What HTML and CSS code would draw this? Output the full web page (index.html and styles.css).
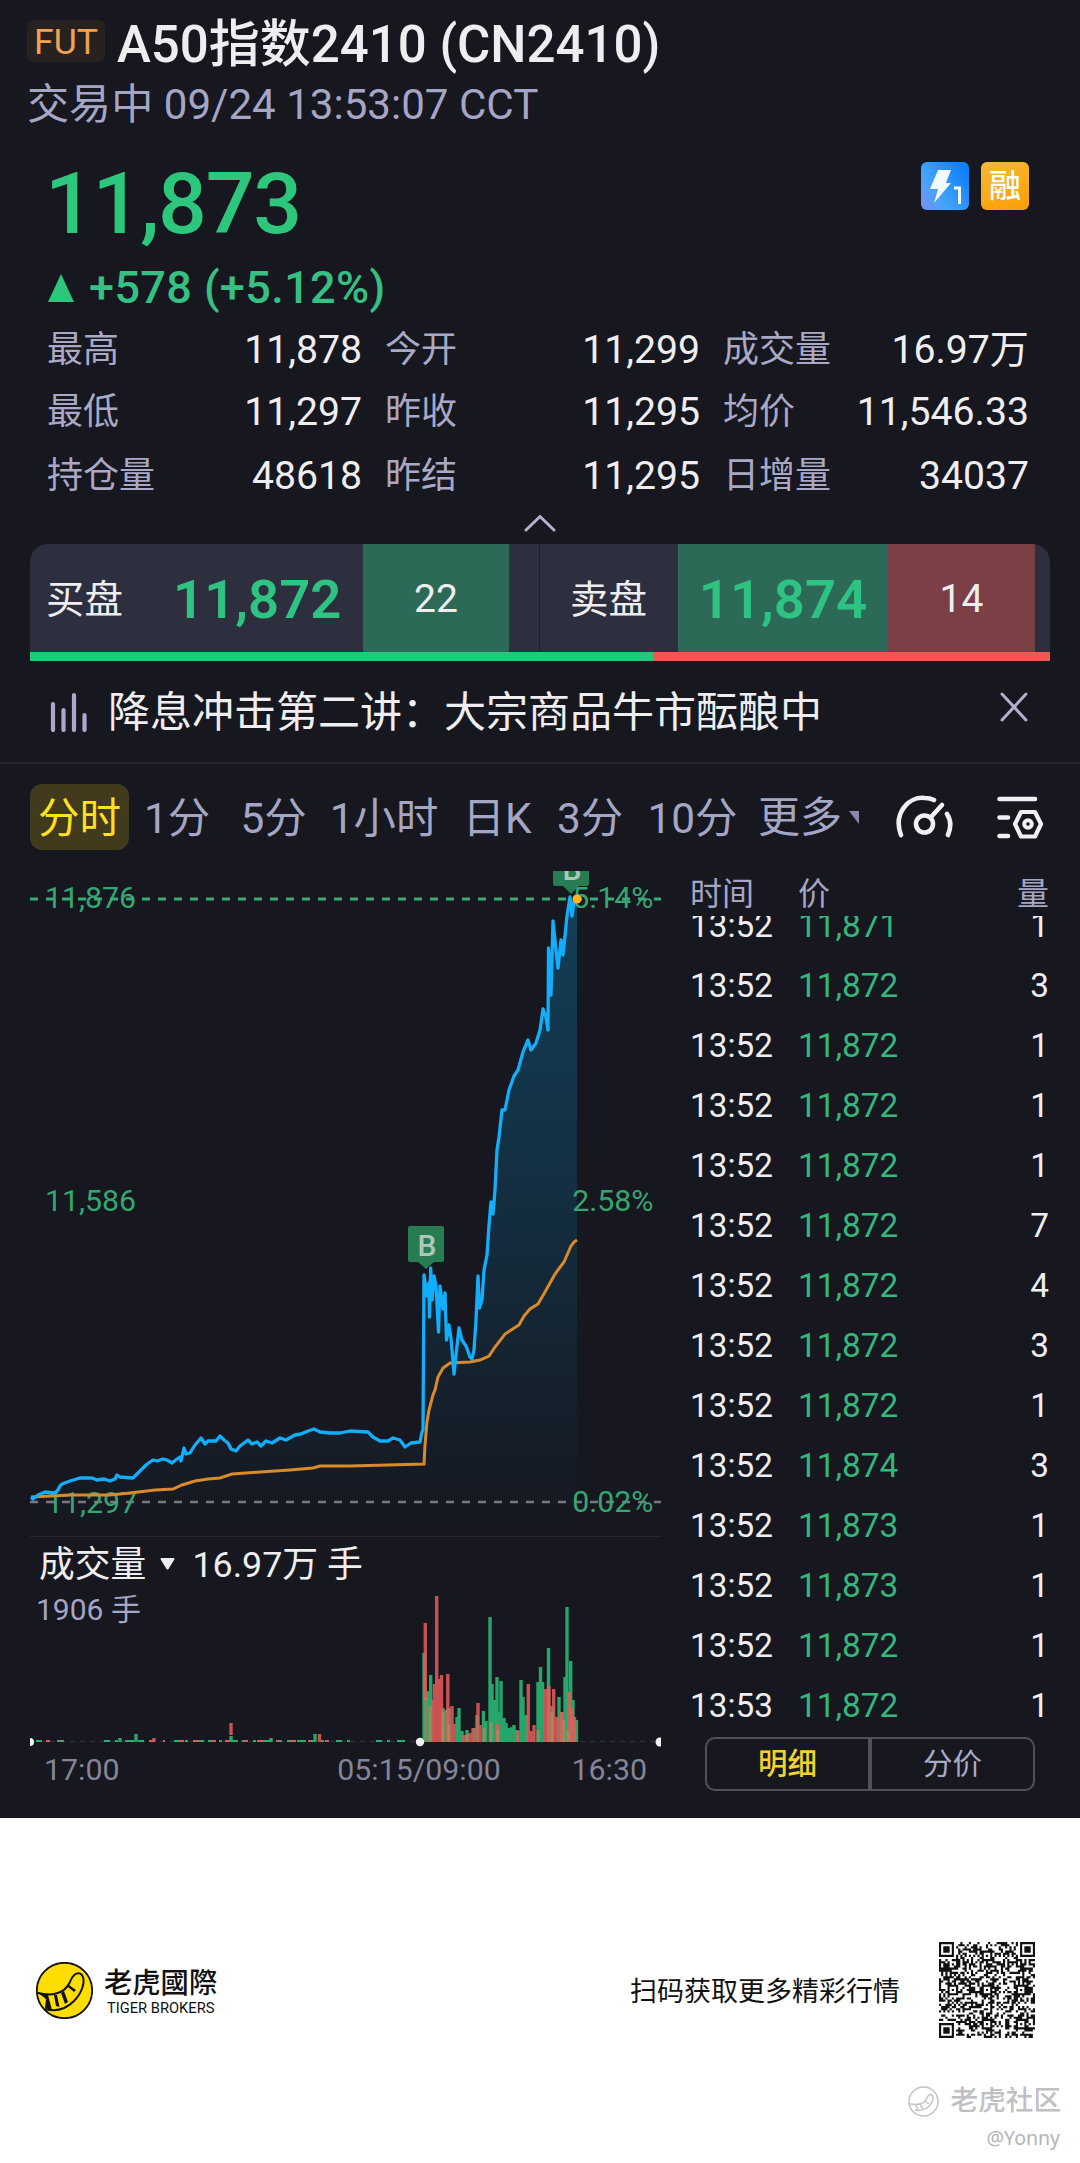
FILE: index.html
```html
<!DOCTYPE html>
<html lang="zh-CN">
<head>
<meta charset="utf-8">
<title>A50指数2410 (CN2410)</title>
<link rel="stylesheet" href="styles.css">
</head>
<body>
<main class="quote">
  <header class="head">
    <div class="title-row"><span class="badge">FUT</span><h1 class="title">A50指数2410 (CN2410)</h1></div>
    <div class="status">交易中 09/24 13:53:07 CCT</div>
  </header>

  <section class="price-row">
    <div class="price">11,873</div>
    <div class="flags">
      <svg class="flag" viewBox="0 0 48 48">
        <defs><linearGradient id="blue" x1="0" y1="1" x2="1" y2="0.3"><stop offset="0" stop-color="#7b8ff5"/><stop offset=".4" stop-color="#43a4fb"/><stop offset="1" stop-color="#0f80fa"/></linearGradient></defs>
        <rect width="48" height="48" rx="6" fill="url(#blue)"/>
        <path d="M17 8H30L25 21H30L13 41L17 27H9Z" fill="#f2f9ff"/>
        <path d="M33 26H38.500V42" fill="none" stroke="#f2f9ff" stroke-width="3"/>
      </svg>
      <span class="flag flag-margin">融</span>
    </div>
  </section>
  <div class="change"><svg class="up" viewBox="0 0 26 28"><path d="M13 0L26 28H0Z"/></svg>+578 (+5.12%)</div>

  <dl class="stats">
    <div class="stat"><dt>最高</dt><dd>11,878</dd></div>
    <div class="stat"><dt>今开</dt><dd>11,299</dd></div>
    <div class="stat"><dt>成交量</dt><dd>16.97万</dd></div>
    <div class="stat"><dt>最低</dt><dd>11,297</dd></div>
    <div class="stat"><dt>昨收</dt><dd>11,295</dd></div>
    <div class="stat"><dt>均价</dt><dd>11,546.33</dd></div>
    <div class="stat"><dt>持仓量</dt><dd>48618</dd></div>
    <div class="stat"><dt>昨结</dt><dd>11,295</dd></div>
    <div class="stat"><dt>日增量</dt><dd>34037</dd></div>
  </dl>
  <div class="collapse"><svg width="32" height="18" viewBox="0 0 32 18"><path d="M2 16L16 2.500L30 16" fill="none" stroke="#b3b2cd" stroke-width="3" stroke-linecap="round"/></svg></div>

  <section class="book">
    <div class="book-row">
      <span class="side">买盘</span><span class="bid">11,872</span><span class="qty qty-bid">22</span><span class="spacer"></span>
      <span class="side side-ask">卖盘</span><span class="ask">11,874</span><span class="qty qty-ask">14</span>
    </div>
    <div class="ratio"><span class="ratio-buy"></span><span class="ratio-sell"></span></div>
  </section>

  <section class="news">
    <svg width="38" height="40" viewBox="0 0 38 40"><path d="M3 12V38M13.500 18V38M24 3V38M34.500 23V38" stroke="#aaa9cb" stroke-width="4.200" stroke-linecap="round"/></svg>
    <span class="news-text">降息冲击第二讲：大宗商品牛市酝酿中</span>
    <svg class="close" width="28" height="30" viewBox="0 0 28 30"><path d="M2 2L26 28M26 2L2 28" stroke="#b0afcc" stroke-width="3" stroke-linecap="round"/></svg>
  </section>

  <nav class="tabs">
    <span class="tab tab-on">分时</span><span class="tab">1分</span><span class="tab">5分</span><span class="tab">1小时</span><span class="tab">日K</span><span class="tab">3分</span><span class="tab">10分</span>
    <span class="tab tab-more">更多<svg width="10" height="13" viewBox="0 0 10 13"><path d="M0 0H10V13Z" fill="#8988a8"/></svg></span>
    <svg class="tool" width="60" height="46" viewBox="894 795 60 46" fill="none" stroke="#f0f0f2" stroke-width="4.600" stroke-linecap="round">
      <path d="M901 835C893 814 908 796 925 798Q930 798 934 800M947 814Q953 823 948 835"/><circle cx="924.500" cy="824" r="8.500"/><path d="M931 817L942 805"/>
    </svg>
    <svg class="tool" width="50" height="46" viewBox="995 796 50 46" fill="none" stroke="#f0f0f2" stroke-width="4.600" stroke-linecap="round">
      <path d="M999.500 800H1035M999.500 818.500H1008M999.500 837H1008"/><path d="M1021 813H1035L1041 825L1035 837.500H1021L1015 825Z" stroke-linejoin="round" stroke-width="4.200"/><circle cx="1028" cy="825" r="3.800" stroke-width="4"/>
    </svg>
  </nav>

  <section class="market">
    <div class="charts">
      <svg class="price-chart" viewBox="30 868 631 668">
        <defs><linearGradient id="area" x1="0" y1="896" x2="0" y2="1536" gradientUnits="userSpaceOnUse"><stop offset="0" stop-color="#0b86bb" stop-opacity=".36"/><stop offset=".5" stop-color="#0b86bb" stop-opacity=".2"/><stop offset="1" stop-color="#0b86bb" stop-opacity="0"/></linearGradient>
        <clipPath id="plot"><rect x="30" y="871" width="631" height="665"/></clipPath></defs>
        <path fill="url(#area)" d="M31 1497L60 1486L80 1478L133 1478L153 1460L172 1463L201 1438L220 1436L236 1451L248 1440L314 1429L368 1432L380 1441L405 1447L420 1442L423 1430L424 1275L427 1296L429 1283L429.500 1317L430.700 1268L432 1300L434 1276L436 1285L438.500 1332L440 1286L443 1309L445 1293L446.500 1340L449 1325L451 1338L454 1374L456 1355L459 1328L462 1340L466 1346L470 1357L472 1359L474 1350L476 1320L478 1276L479.500 1308L482 1300L484 1270L487 1255L489 1225L491 1202L493 1214L495 1190L497 1150L499 1137L502 1110L505 1110L509 1090L514 1076L518 1070L523 1052L528 1040L531 1050L536 1043L540 1030L543 1009L546 1017L548 1030L548.500 948L551 995L553 921L556 950L558 968L561 940L563 955L567 916L570 897L572 916L574 902L577 899V1536H31Z"/>
        <path d="M30 1502H661" stroke="#777783" stroke-width="2.500" stroke-dasharray="8 8"/>
        <g class="axis">
          <text x="45" y="908">11,876</text><text x="45" y="1211">11,586</text><text x="46" y="1513">11,297</text>
          <text x="653.500" y="908" text-anchor="end">5.14%</text><text x="653.500" y="1211" text-anchor="end">2.58%</text><text x="653.500" y="1512" text-anchor="end">0.02%</text>
        </g>
        <path d="M30 899H661" stroke="#34ad77" stroke-width="2.800" stroke-dasharray="8 8"/>
        <path fill="none" stroke="#d98a2b" stroke-width="3" d="M31 1497L70 1495L110 1495L130 1493L155 1490L173 1489L182 1485L195 1481L208 1479L220 1478L232 1474L260 1472L290 1470L313 1468L320 1466L350 1466L424 1464L425 1445L427 1422L429 1410L433 1395L435 1390L438 1377L443 1368L450 1363L470 1362L480 1360L489 1356L495 1347L505 1334L519 1325L524 1316L530 1309L538 1304L545 1292L555 1274L564 1262L571 1246L574 1242L577 1240"/>
        <path fill="none" stroke="#12aefb" stroke-width="3.300" stroke-linejoin="round" d="M31 1497L33 1499L38 1495L45 1492L55 1493L58 1490L60 1486L62 1484L70 1481L80 1478L92 1478L97 1480L104 1479L110 1481L115 1479L117 1475L120 1477L133 1478L137 1474L141 1470L146 1465L150 1462L153 1460L157 1461L163 1459L167 1460L172 1463L177 1459L180 1457L181 1461L184 1448L186 1454L190 1453L195 1445L201 1438L205 1444L208 1441L216 1441L220 1436L224 1440L228 1443L231 1449L236 1451L240 1446L248 1440L252 1444L257 1442L261 1446L266 1441L272 1443L280 1438L286 1440L295 1435L301 1434L308 1431L314 1429L320 1432L330 1433L340 1433L350 1431L368 1432L373 1437L380 1441L388 1441L393 1438L400 1440L405 1447L411 1443L420 1442L422 1432L423 1430L424 1275L427 1296L429 1283L429.500 1317L430.700 1268L432 1300L434 1276L436 1285L438.500 1332L440 1286L443 1309L445 1293L446.500 1340L449 1325L451 1338L454 1374L456 1355L459 1328L462 1340L466 1346L470 1357L472 1359L474 1350L476 1320L478 1276L479.500 1308L482 1300L484 1270L487 1255L489 1225L491 1202L493 1214L495 1190L497 1150L499 1137L502 1110L505 1110L509 1090L514 1076L518 1070L523 1052L528 1040L531 1050L536 1043L540 1030L543 1009L546 1017L548 1030L548.500 948L551 995L553 921L556 950L558 968L561 940L563 955L567 916L570 897L572 916L574 902L577 899"/>
        <g clip-path="url(#plot)">
          <path class="mark" d="M410 1226H442Q444 1226 444 1228V1260Q444 1262 442 1262H434L426 1269L418 1262H410Q408 1262 408 1260V1228Q408 1226 410 1226Z"/><text class="mark-b" x="427" y="1255.500">B</text>
          <path class="mark" d="M553 850H589V884Q589 886 587 886H579L571 894L563 886H555Q553 886 553 884Z"/><text class="mark-b" x="572" y="880">B</text>
        </g>
        <circle cx="577" cy="899" r="4.500" fill="#ffb51e"/>
      </svg>
      <div class="vol-head">成交量<svg width="15" height="12" viewBox="0 0 15 12"><path d="M1 0H14Q15 1 14 2L8.500 11Q7.500 12 6.500 11L1 2Q0 1 1 0Z" fill="#eeeef2"/></svg>16.97万 手</div>
      <svg class="vol-chart" viewBox="30 1593 631 157">
        <text class="vol-max" x="36" y="1620">1906 手</text>
        <path d="M30 1741.500H661" stroke="#2c2d37" stroke-width="1.500" stroke-dasharray="5 5"/>
        <path stroke="#2bae70" stroke-width="2" stroke-dasharray="6 5 3 7 9 4" d="M36 1741H64M104 1741H150M174 1741H330M336 1741H350M376 1741H405"/>
        <path stroke="#c96463" stroke-width="2" stroke-dasharray="4 9 7 12" d="M46 1741H62M150 1741H165M180 1741H315M325 1741H336"/>
        <path stroke="#27ae70" stroke-width="3.400" opacity=".95" d="M136 1742V1734M120 1742V1738M231 1742V1736M271 1742V1738M315 1742V1734M424 1742V1653M428 1742V1691M430.700 1742V1675M443 1742V1708M446 1742V1710M449 1742V1708M457 1742V1717M459 1742V1708M462 1742V1731M467 1742V1730M475 1742V1728M477 1742V1715M483.500 1742V1711M486 1742V1721M490 1742V1617M492 1742V1684M495 1742V1700M497 1742V1677M499 1742V1712M501 1742V1681M504 1742V1718M506 1742V1723M509 1742V1728M512 1742V1727M514 1742V1725M517 1742V1730M521 1742V1680M523 1742V1697M526 1742V1715M538 1742V1682M540.500 1742V1667M542.500 1742V1682M548.500 1742V1648M552 1742V1706M559 1742V1697M562 1742V1712M565 1742V1677M567 1742V1607M570.700 1742V1661M573 1742V1700M576.500 1742V1720"/>
        <path stroke="#ea5c5b" stroke-width="3.400" opacity=".85" d="M154 1742V1738M231 1735V1723M319.500 1742V1734M425.300 1700V1623M433 1742V1700M436.700 1742V1596M434.500 1742V1684M439 1742V1679M441.500 1742V1675M447.800 1742V1674M452 1742V1706M454 1742V1724M464 1742V1735M470 1742V1733M473 1742V1728M478 1742V1703M480 1742V1725M497.500 1742V1724M518 1742V1731M528.300 1742V1684M531 1742V1731M534 1742V1725M545.500 1742V1689M549 1742V1686M553.700 1742V1689M557 1742V1717M561.500 1742V1712M569 1742V1692M571.500 1742V1708M574.500 1742V1717"/>
        <path stroke="#b8895f" stroke-width="3" opacity=".7" d="M426 1742V1697M430 1742V1706M443 1742V1712M449 1742V1725M467 1742V1735M484 1742V1728M491 1742V1722M498 1742V1730M538 1742V1730M552 1742V1712M564 1742V1720M568 1742V1730"/>
        <g fill="#f2f2f4"><circle cx="30" cy="1742" r="4"/><circle cx="420" cy="1742" r="4.200"/><circle cx="660" cy="1742" r="4.500"/></g>
      </svg>
      <div class="times"><span>17:00</span><span>05:15/09:00</span><span>16:30</span></div>
    </div>

    <div class="ticks">
      <div class="tick tick-head"><span>时间</span><span>价</span><span>量</span></div>
      <div class="tick-list"><div class="tick-inner">
        <div class="tick"><span>13:52</span><span>11,871</span><span>1</span></div>
        <div class="tick"><span>13:52</span><span>11,872</span><span>3</span></div>
        <div class="tick"><span>13:52</span><span>11,872</span><span>1</span></div>
        <div class="tick"><span>13:52</span><span>11,872</span><span>1</span></div>
        <div class="tick"><span>13:52</span><span>11,872</span><span>1</span></div>
        <div class="tick"><span>13:52</span><span>11,872</span><span>7</span></div>
        <div class="tick"><span>13:52</span><span>11,872</span><span>4</span></div>
        <div class="tick"><span>13:52</span><span>11,872</span><span>3</span></div>
        <div class="tick"><span>13:52</span><span>11,872</span><span>1</span></div>
        <div class="tick"><span>13:52</span><span>11,874</span><span>3</span></div>
        <div class="tick"><span>13:52</span><span>11,873</span><span>1</span></div>
        <div class="tick"><span>13:52</span><span>11,873</span><span>1</span></div>
        <div class="tick"><span>13:52</span><span>11,872</span><span>1</span></div>
        <div class="tick"><span>13:53</span><span>11,872</span><span>1</span></div>
      </div></div>
      <div class="switch"><span class="switch-on">明细</span><span>分价</span></div>
    </div>
  </section>
</main>

<footer class="foot">
  <div class="promo">
    <svg class="logo" viewBox="0 0 57 57">
      <circle cx="28.500" cy="28.500" r="27.700" fill="#ffdd00" stroke="#111" stroke-width="1.800"/>
      <path d="M2 31C14 34 28 33 34 20C37 12 42 9 46 13C50 19 46 31 38 39C30 47 20 50 9 47" fill="none" stroke="#111" stroke-width="2"/>
      <path d="M1 30L12 33L16 48L9 46L10 37ZM18 33L21 33L23.500 45L20 44ZM25 31L28 29L32 40L29 42ZM32 25L33 23L40 28L38 30Z" fill="#111"/>
    </svg>
    <div class="brand"><div class="brand-cn">老虎國際</div><div class="brand-en">TIGER BROKERS</div></div>
    <div class="scan">扫码获取更多精彩行情</div>
    <svg class="qr" id="qr" viewBox="0 0 45 45"></svg>
  </div>
  <div class="community">
    <svg width="31" height="31" viewBox="0 0 31 31" fill="none" stroke="#c3c3c7" stroke-width="1.500"><circle cx="15.500" cy="15.500" r="14.500"/><path d="M2 18C9 19 17 18 19 12C21 7 25 8 25 12C24 20 17 26 7 24M8 19L10 24M12 18L15 23M17 15L21 18"/></svg>
    <span>老虎社区</span>
  </div>
  <div class="author">@Yonny</div>
</footer>
<script src="qr.js"></script>
</body>
</html>
```
FILE: styles.css
```css
* { box-sizing: border-box; margin: 0; padding: 0; }
body { width: 1080px; background: #fff; font-family: Roboto, "Noto Sans CJK SC", sans-serif; }
svg { display: block; flex: none; }
.quote { height: 1818px; background: #16171f; color: #eeeef1; padding-top: 14px; }

.title-row { display: flex; align-items: center; height: 60px; padding-left: 27px; gap: 12px; }
.badge { width: 78px; height: 42px; margin-top: -6px; border-radius: 6px; background: #27221f; color: #f3a152; font-size: 35.500px; line-height: 44px; text-align: center; }
.title { font-size: 51px; line-height: 61px; font-weight: 500; white-space: nowrap; }
.status { height: 61px; line-height: 62px; padding-left: 27px; font-size: 42.100px; color: #a5a6c5; }

.price-row { display: flex; justify-content: space-between; height: 137px; padding: 0 51px 0 45px; }
.price { font-size: 86px; line-height: 138px; font-weight: 500; letter-spacing: -1.3px; color: #2cc67d; }
.flags { display: flex; gap: 12px; padding-top: 27px; }
.flag { width: 48px; height: 48px; }
.flag-margin { border-radius: 6px; background: linear-gradient(160deg, #f5b935, #fb9e05); color: #fff; font-size: 32px; line-height: 48px; font-weight: 500; text-align: center; }
.change { display: flex; align-items: center; gap: 15px; height: 32px; padding-left: 48px; font-size: 45px; letter-spacing: .4px; line-height: 32px; font-weight: 500; color: #37c083; }
.up { width: 26px; height: 28px; fill: #2cc67d; }

.stats { display: grid; grid-template-columns: 315px 315px 306px; grid-template-rows: 62px 62px 65px; column-gap: 23px; padding: 15px 0 0 47px; height: 204px; }
.stat { display: flex; justify-content: space-between; align-items: center; line-height: 62px; }
.stat dt { font-size: 36px; color: #a9a9c6; }
.stat dd { font-size: 39.200px; }
.collapse { display: flex; justify-content: center; height: 36px; padding-top: 6px; }

.book { width: 1020px; margin: 0 30px; height: 117px; }
.book-row { display: flex; height: 108px; line-height: 111px; border-radius: 18px 18px 0 0; overflow: hidden; background: #2d2e3e; }
.side { width: 143px; padding-left: 16px; font-size: 38.500px; }
.bid, .ask { font-size: 54.500px; font-weight: 600; color: #2fc383; }
.bid { width: 190px; }
.qty { width: 146px; text-align: center; font-size: 39px; }
.qty-bid { background: #2c6a57; }
.spacer { width: 30px; }
.side-ask { width: 139px; padding-left: 30px; border-left: 1px solid #1e1f2a; }
.ask { width: 210px; text-align: center; background: #2c6a57; }
.qty-ask { width: 147px; background: #7c3f46; }
.ratio { display: flex; height: 9px; }
.ratio-buy { width: 623px; background: #22c97a; }
.ratio-sell { flex: 1; background: #ee5853; }

.news { display: flex; align-items: center; height: 103px; padding: 0 52px 0 50px; border-bottom: 2px solid #23242d; }
.news-text { margin-left: 20px; font-size: 42px; line-height: 60px; padding-top: 2px; white-space: nowrap; }
.close { margin: -9px 0 0 auto; }

.tabs { display: grid; grid-template-columns: 99px 96px 97px 124px 102px 84px 121px 141px 101px 50px; height: 104px; padding: 20px 0 0 30px; font-size: 42.400px; color: #a5a6c4; }
.tab { height: 66px; line-height: 69px; text-align: center; white-space: nowrap; }
.tab-on { border-radius: 12px; background: #423a1d; color: #ffe11f; font-size: 41.500px; }
.tab-more { display: flex; align-items: center; gap: 7px; padding-left: 5px; font-size: 42px; }
.tool { margin-top: 11px; }

.market { display: flex; height: 950px; padding-left: 30px; }
.charts { width: 631px; }
.price-chart { width: 631px; height: 668px; }
.axis { font-size: 30.300px; fill: #34a671; }
.mark { fill: #277c54; }
.mark-b { font-size: 30px; font-weight: 500; fill: #acc9b8; text-anchor: middle; }
.vol-head { display: flex; align-items: center; height: 57px; padding-left: 9px; border-top: 1px solid #25262f; font-size: 35.800px; line-height: 57px; white-space: pre; }
.vol-head svg { margin: -3px 17px 0 14px; }
.vol-chart { width: 631px; height: 157px; }
.vol-max { font-size: 30px; fill: #a5a6c4; }
.times { display: flex; justify-content: space-between; padding: 0 14px; height: 38px; line-height: 39px; font-size: 30.300px; color: #85859a; }
.times span:nth-child(2) { margin-left: 147px; }

.ticks { width: 359px; margin-left: 29px; }
.tick { display: grid; grid-template-columns: 108px 1fr auto; height: 60px; line-height: 60px; font-size: 33.300px; }
.tick span:nth-child(2) { color: #35b67c; }
.tick-head { height: 48px; line-height: 52px; font-size: 32px; color: #a5a6c4; }
.tick-head span:nth-child(2) { color: inherit; }
.tick-list { height: 821px; overflow: hidden; }
.tick-inner { margin-top: -20px; }
.switch { display: flex; width: 330px; height: 54px; margin-left: 15px; border: 2px solid #50515f; border-radius: 10px; font-size: 29.500px; line-height: 51px; color: #a9a9c8; }
.switch span { flex: 1; text-align: center; }
.switch .switch-on { color: #f3d22b; font-weight: 500; border-right: 4px solid #50515f; }

.foot { height: 345px; color: #111; }
.promo { display: flex; align-items: flex-start; height: 268px; padding: 124px 45px 0 36px; }
.logo { width: 57px; height: 57px; margin-top: 20px; }
.brand { margin: 25px 0 0 11px; width: 113px; }
.brand-cn { font-size: 28.300px; line-height: 33px; font-weight: 500; white-space: nowrap; }
.brand-en { font-size: 14.700px; line-height: 17px; padding-left: 3px; white-space: nowrap; }
.scan { margin: 34px 39px 0 auto; font-size: 27px; line-height: 32px; }
.qr { width: 96px; height: 96px; }
.community { display: flex; align-items: center; justify-content: flex-end; gap: 12px; height: 30px; padding-right: 19px; font-size: 27.600px; line-height: 30px; font-weight: 500; color: #c0c0c4; }
.author { padding-right: 20px; text-align: right; font-size: 19.500px; line-height: 44px; font-family: "Noto Sans", sans-serif; color: #b4b4b8; }
```
FILE: qr.js
```js
// Draws a 45-module code: finder, alignment and timing patterns plus data cells.
const N = 45;
const ring = (x, y, cx, cy) => Math.max(Math.abs(x - cx), Math.abs(y - cy));
// xorshift generator for the data cells
let seed = 20241;
const bit = () => { seed ^= seed << 13; seed ^= seed >>> 17; seed ^= seed << 5; return ((seed >>> 8) & 1) === 1; };
const finders = [[3, 3], [41, 3], [3, 41]];
const aligns = [[22, 6], [6, 22], [22, 22], [38, 22], [22, 38], [38, 38]];
function cell(x, y) {
  const random = bit();
  for (const [cx, cy] of finders) { const r = ring(x, y, cx, cy); if (r <= 4) return r === 3 || r <= 1; }
  for (const [cx, cy] of aligns) { const r = ring(x, y, cx, cy); if (r <= 2) return r !== 1; }
  if (x === 6 || y === 6) return (x + y) % 2 === 0;
  return random;
}
let d = "";
for (let y = 0; y < N; y++) {
  for (let x = 0; x < N; x++) {
    if (!cell(x, y)) continue;
    d += `M${x} ${y}h1v1h-1z`;
  }
}
const path = document.createElementNS("http://www.w3.org/2000/svg", "path");
path.setAttribute("d", d);
path.setAttribute("fill", "#111");
document.getElementById("qr").appendChild(path);
```
